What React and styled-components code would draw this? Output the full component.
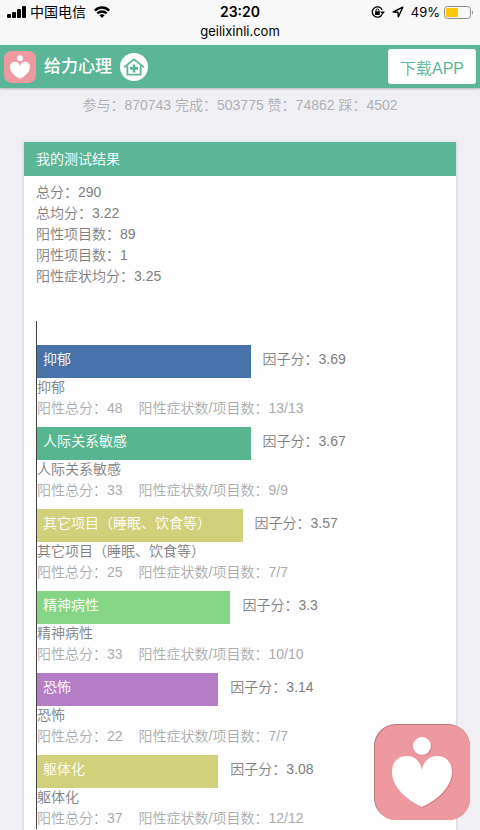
import styled, { createGlobalStyle } from "styled-components";

const summary = [
  { label: "总分", value: "290" },
  { label: "总均分", value: "3.22" },
  { label: "阳性项目数", value: "89" },
  { label: "阴性项目数", value: "1" },
  { label: "阳性症状均分", value: "3.25" },
];

const factors = [
  { name: "抑郁", score: "3.69", total: 48, items: "13/13", width: 53, color: "#4872aa" },
  { name: "人际关系敏感", score: "3.67", total: 33, items: "9/9", width: 53, color: "#57b590" },
  { name: "其它项目（睡眠、饮食等）", score: "3.57", total: 25, items: "7/7", width: 51, color: "#d2d17b" },
  { name: "精神病性", score: "3.3", total: 33, items: "10/10", width: 48, color: "#84d586" },
  { name: "恐怖", score: "3.14", total: 22, items: "7/7", width: 45, color: "#b67dc7" },
  { name: "躯体化", score: "3.08", total: 37, items: "12/12", width: 45, color: "#d2d17b" },
];

const heart =
  "M48 46C47 38 41 32 33 32C24 32 18 38 18 48C18 62 32 76 48 83C64 76 78 62 78 48C78 38 72 32 63 32C55 32 49 38 48 46Z";

function HeartLogo({ size, shadow }) {
  return (
    <svg width={size} height={size} viewBox="0 0 96 96" aria-hidden="true">
      <rect width="96" height="96" rx="22" fill={shadow ? "#b9747c" : "#ee989f"} />
      {shadow && <rect x="1" y="1" width="95" height="95" rx="21" fill="#ee989f" />}
      {shadow && (
        <g fill="#c9737d" opacity="0.6" transform="translate(1 1)">
          <circle cx="48" cy="22" r="9" />
          <path d={heart} />
        </g>
      )}
      <g fill="#fff">
        <circle cx="48" cy="22" r="9" />
        <path d={heart} />
      </g>
    </svg>
  );
}

export default function App() {
  return (
    <Screen>
      <GlobalStyle />
      <StatusBar>
        <StatusRow>
          <StatusSide>
            <svg width="19" height="12" viewBox="0 0 19 12" aria-hidden="true">
              <rect x="0" y="8" width="4" height="4" rx="1" />
              <rect x="5" y="6" width="4" height="6" rx="1" />
              <rect x="10" y="3" width="4" height="9" rx="1" />
              <rect x="15" y="0" width="4" height="12" rx="1" />
            </svg>
            <Carrier>中国电信</Carrier>
            <svg width="16" height="12" viewBox="0 0 16 12" aria-hidden="true">
              <g fill="none" stroke="#000" strokeWidth="2.4">
                <path d="M0.8 4.6C4.8 0.4 11.2 0.4 15.2 4.6" />
                <path d="M3.4 7.4C6 4.9 10 4.9 12.6 7.4" />
              </g>
              <path d="M5.4 9.3C6.9 7.9 9.1 7.9 10.6 9.3L8 12Z" />
            </svg>
          </StatusSide>
          <Clock>23:20</Clock>
          <StatusSide $end>
            <svg width="14" height="12" viewBox="0 0 14 12" aria-hidden="true">
              <path
                d="M11.2 8.2A5.2 5.2 0 1 1 11.2 3.8"
                fill="none"
                stroke="#000"
                strokeWidth="1.3"
              />
              <path d="M9 5.4H14L11.5 8.6Z" />
              <rect x="4" y="5.3" width="4.8" height="3.6" rx="0.5" />
              <path d="M5 5.5V4.4A1.4 1.4 0 0 1 7.8 4.4V5.5" fill="none" stroke="#000" />
            </svg>
            <svg width="12" height="12" viewBox="0 0 12 12" aria-hidden="true">
              <path
                d="M1.2 6L10.8 1.2L6.4 10.8L5.9 6.2Z"
                fill="none"
                stroke="#000"
                strokeWidth="1.4"
                strokeLinejoin="round"
              />
            </svg>
            <Battery>
              <span>49%</span>
              <svg width="29" height="13" viewBox="0 0 29 13" aria-hidden="true">
                <rect x="0.5" y="0.5" width="26" height="12" rx="3" fill="none" stroke="#8e8e90" />
                <rect x="2" y="2" width="12" height="9" rx="1" fill="#fcc60a" />
                <path d="M28 4.5C29.4 5 29.4 8 28 8.5Z" fill="#8e8e90" />
              </svg>
            </Battery>
          </StatusSide>
        </StatusRow>
        <Domain>geilixinli.com</Domain>
      </StatusBar>

      <Header>
        <HeartLogo size={32} />
        <Brand>给力心理</Brand>
        <HomeLink href="#home" aria-label="首页">
          <svg width="28" height="28" viewBox="0 0 28 28" aria-hidden="true">
            <circle cx="14" cy="14" r="14" fill="#fff" />
            <g fill="none" stroke="#5bb698" strokeWidth="1.8">
              <path d="M4.2 14.2L14 6.4L23.8 14.2" />
              <path d="M7.4 13V21.6H20.6V13" />
              <path d="M14 11.4V19.4M10 15.4H18" strokeWidth="2.6" />
            </g>
          </svg>
        </HomeLink>
        <DownloadButton type="button">下载APP</DownloadButton>
      </Header>

      <Content>
        <Counts>参与：870743 完成：503775 赞：74862 踩：4502</Counts>
        <Card>
          <CardTitle>我的测试结果</CardTitle>
          <CardBody>
            {summary.map((each) => (
              <SummaryLine key={each.label}>
                {each.label}：{each.value}
              </SummaryLine>
            ))}
            <Chart>
              {factors.map((each) => (
                <Factor key={each.name}>
                  <BarRow>
                    <Bar $width={each.width} $color={each.color}>
                      {each.name}
                    </Bar>
                    <span>因子分：{each.score}</span>
                  </BarRow>
                  <FactorName>{each.name}</FactorName>
                  <Detail>
                    <span>阳性总分：{each.total}</span>
                    <span>阳性症状数/项目数：{each.items}</span>
                  </Detail>
                </Factor>
              ))}
            </Chart>
          </CardBody>
        </Card>
      </Content>

      <FloatingButton type="button" aria-label="给力心理">
        <HeartLogo size={96} shadow />
      </FloatingButton>
    </Screen>
  );
}

const GlobalStyle = createGlobalStyle`
  * {
    box-sizing: border-box;
  }
  body {
    margin: 0;
    background-color: #efeff4;
    font-family: "Liberation Sans", "Noto Sans CJK SC", sans-serif;
    font-size: 14px;
    font-weight: 350;
    color: #808080;
  }
  h1, h2, h3, p {
    margin: 0;
    font-size: inherit;
    font-weight: inherit;
  }
  svg {
    display: block;
    flex-shrink: 0;
  }
`;

const Screen = styled.div`
  height: 100vh;
  display: flex;
  flex-direction: column;
`;

const StatusBar = styled.div`
  flex-shrink: 0;
  padding: 2px 7px 5px;
  background-color: #f8f8f8;
  color: #000;
  font-family: Inter, "Noto Sans CJK SC", sans-serif;
  font-weight: 400;
`;

const StatusRow = styled.div`
  display: grid;
  grid-template-columns: 1fr auto 1fr;
  align-items: center;
  height: 20px;
`;

const StatusSide = styled.div`
  display: flex;
  align-items: center;
  justify-content: ${(props) => (props.$end ? "flex-end" : "flex-start")};
  gap: ${(props) => (props.$end ? "7px" : "4px")};
`;

const Carrier = styled.span`
  margin-right: 4px;
  line-height: 20px;
`;

const Clock = styled.span`
  font-size: 14px;
  font-weight: 600;
  line-height: 20px;
`;

const Battery = styled.div`
  display: flex;
  align-items: center;
  gap: 4px;
  font-size: 13px;
  line-height: 20px;
`;

const Domain = styled.p`
  font-size: 13px;
  line-height: 18px;
  text-align: center;
`;

const Header = styled.header`
  flex-shrink: 0;
  display: flex;
  align-items: center;
  height: 43px;
  padding: 0 4px;
  background-color: #5bb698;
  box-shadow: 0 1px 2px rgba(0, 0, 0, 0.25);
  z-index: 1;
`;

const Brand = styled.h1`
  margin: 0 8px;
  color: #fff;
  font-size: 17px;
  font-weight: 500;
  line-height: 24px;
`;

const HomeLink = styled.a`
  display: block;
`;

const DownloadButton = styled.button`
  height: 35px;
  margin-left: auto;
  padding: 0 12px;
  border: 0;
  border-radius: 3px;
  background-color: #fff;
  color: #5bb698;
  font-family: inherit;
  font-size: 16px;
  font-weight: inherit;
`;

const Content = styled.main`
  flex: 1;
  min-height: 0;
  padding: 7px 24px 0;
  overflow-y: auto;
  scrollbar-width: none;
`;

const Counts = styled.p`
  color: #b0b0b4;
  line-height: 21px;
  text-align: center;
`;

const Card = styled.section`
  margin-top: 26px;
  background-color: #fefefe;
  box-shadow: 0 1px 3px rgba(0, 0, 0, 0.2);
`;

const CardTitle = styled.h2`
  padding: 0 12px;
  background-color: #5bb698;
  color: #fff;
  line-height: 34px;
`;

const CardBody = styled.div`
  padding: 6px 12px 12px;
`;

const SummaryLine = styled.p`
  line-height: 21px;
`;

const Chart = styled.div`
  margin-top: 34px;
  padding-top: 24px;
  border-left: 1px solid #444;
`;

const Factor = styled.div`
  margin-bottom: 8px;
`;

const BarRow = styled.div`
  display: flex;
  gap: 12px;
  padding-right: 4px;
  line-height: 28px;
`;

const Bar = styled.div`
  width: ${(props) => props.$width}%;
  height: 33px;
  margin-bottom: -1px;
  padding: 0 6px;
  background-color: ${(props) => props.$color};
  color: #fff;
  white-space: nowrap;
`;

const FactorName = styled.h3`
  line-height: 21px;
`;

const Detail = styled.p`
  display: flex;
  gap: 16px;
  color: #acacac;
  line-height: 21px;
`;

const FloatingButton = styled.button`
  position: fixed;
  right: 10px;
  bottom: 10px;
  padding: 0;
  border: 0;
  background: none;
  z-index: 2;
`;
